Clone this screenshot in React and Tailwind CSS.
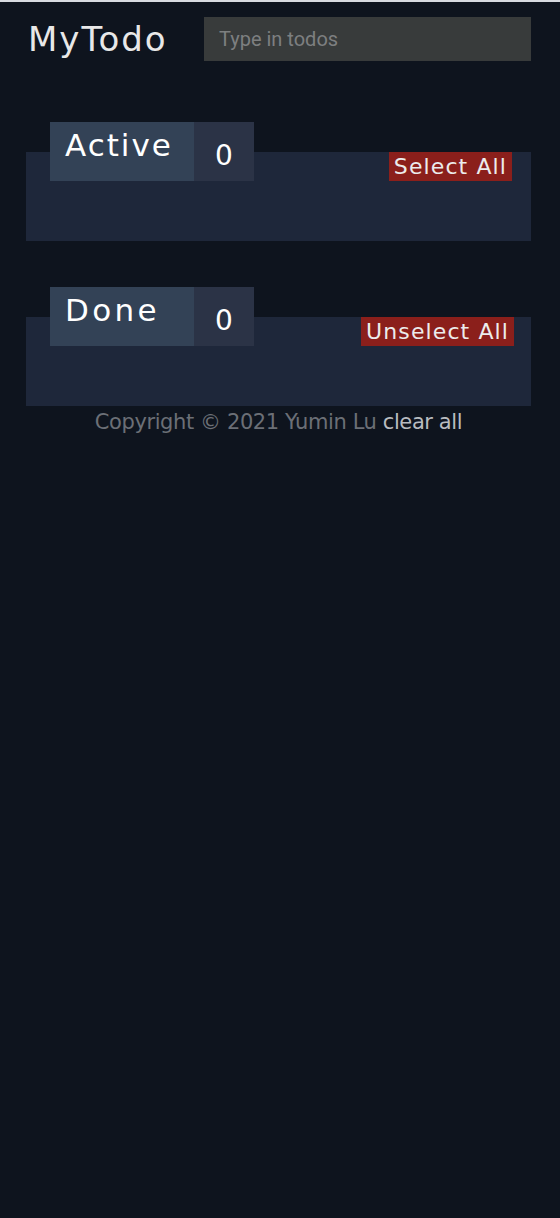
import React from "react";

const font = { fontFamily: '"DejaVu Sans", "Open Sans", sans-serif' };

function Section({ title, count, action, titleTrack, btnMr }) {
  return (
    <div className="ml-[26px] w-[505px] mt-[30px] h-[89px] bg-[#1e273a] flex justify-between items-start">
      <div className="ml-[24px] -mt-[30px] flex h-[59px]">
        <div
          className={`w-[144px] h-full bg-[#334256] text-white text-[31px] pl-[15px] leading-[46px] ${titleTrack}`}
        >
          {title}
        </div>
        <div className="w-[60px] h-full bg-[#2b3346] text-white text-[28px] flex items-center justify-center pt-[8px]">
          {count}
        </div>
      </div>
      <button
        className={`${btnMr} h-[29px] bg-[#8b1f1b] text-[#ececec] text-[22px] leading-[28px] px-[5px] tracking-[1.1px]`}
      >
        {action}
      </button>
    </div>
  );
}

export default function App() {
  return (
    <div className="min-h-[1218px] bg-[#0e141e] border-t-2 border-[#d8dbe0]" style={font}>
      <header className="flex items-start justify-between pt-[15px] pl-[28px] pr-[29px]">
        <div className="text-[#e8e8e8] text-[34px] leading-[44px] tracking-[2px]">MyTodo</div>
        <input
          className="w-[327px] h-[44px] bg-[#383b3b] px-[15px] text-[20px] text-[#ddd] placeholder-[#7d7f80] outline-none"
          style={{ fontFamily: 'Roboto, "Liberation Sans", Arial, sans-serif' }}
          placeholder="Type in todos"
        />
      </header>
      <div className="pt-[61px]">
        <Section title="Active" count="0" action="Select All" titleTrack="tracking-[2px]" btnMr="mr-[19px]" />
        <div className="h-[46px]" />
        <Section title="Done" count="0" action="Unselect All" titleTrack="tracking-[3.3px]" btnMr="mr-[17px]" />
      </div>
      <div className="ml-[26px] w-[505px] text-center text-[21px] leading-[24px] tracking-[-0.4px] mt-[4px] text-[#6b6f76]">
        Copyright © 2021 Yumin Lu <span className="text-[#b9bcc0]">clear all</span>
      </div>
    </div>
  );
}
